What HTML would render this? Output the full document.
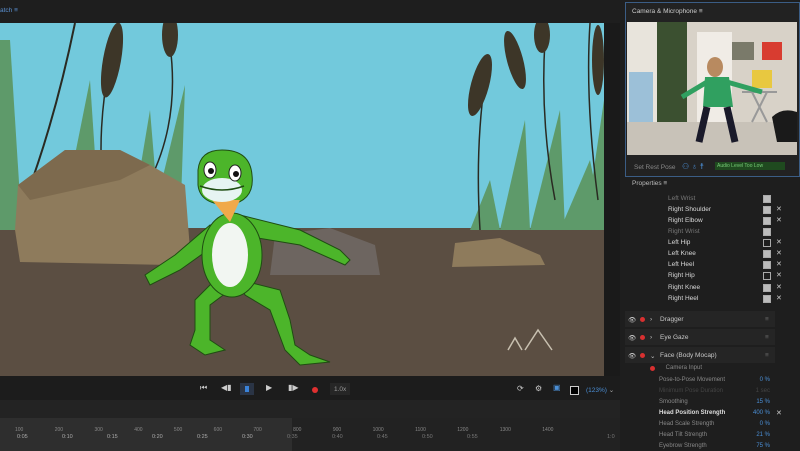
<!DOCTYPE html>
<html><head><meta charset="utf-8"><style>
*{margin:0;padding:0;box-sizing:border-box}
body{width:800px;height:451px;overflow:hidden;background:#1d1d1d;font-family:"Liberation Sans",sans-serif;position:relative}
.a{position:absolute}
.t{position:absolute;font-size:6.5px;color:#c8c8c8;white-space:nowrap}
.lbl{position:absolute;left:668px;font-size:6.5px;color:#d8d8d8}
.dim{color:#777}
.cb{position:absolute;left:763px;width:8px;height:8px;border:1px solid #aaa;background:#bbb}
.cb.e{background:transparent}
.x{position:absolute;left:776px;font-size:7px;color:#ccc}
.v{position:absolute;right:30px;font-size:6px;color:#4b8fd6}
.pl{position:absolute;left:659px;font-size:6px;color:#888}
</style></head><body>
<!-- header -->
<div class="a" style="left:0;top:0;width:620px;height:23px;background:#1e1e1e"></div>
<div class="t" style="left:0;top:7px;color:#5a8fd0">atch ≡</div>
<!-- scene -->
<svg class="a" style="left:0;top:23px" width="604" height="353" viewBox="0 23 604 353">
<rect x="0" y="23" width="604" height="207" fill="#72c9dc"/>
<rect x="0" y="228" width="604" height="148" fill="#5b4e42"/>
<!-- grass left -->
<polygon points="0,40 10,40 22,230 0,230" fill="#5e9a6a"/>
<polygon points="60,230 90,80 100,230" fill="#5e9a6a"/>
<polygon points="130,230 150,110 160,230" fill="#5e9a6a"/>
<polygon points="150,230 185,85 180,230" fill="#5e9a6a"/>
<path d="M25,200 Q55,120 75,23" stroke="#2a2a22" stroke-width="2" fill="none"/>
<path d="M105,200 Q95,140 110,60" stroke="#2a2a22" stroke-width="1.5" fill="none"/>
<path d="M150,180 Q180,120 170,45" stroke="#2a2a22" stroke-width="1.5" fill="none"/>
<ellipse cx="112" cy="60" rx="9" ry="38" fill="#3d3628" transform="rotate(10 112 60)"/>
<ellipse cx="170" cy="35" rx="8" ry="22" fill="#3d3628"/>
<!-- grass right -->
<polygon points="470,230 490,180 500,230" fill="#5e9a6a"/>
<polygon points="500,230 525,120 530,230" fill="#5e9a6a"/>
<polygon points="530,230 560,110 565,230" fill="#5e9a6a"/>
<polygon points="560,230 590,160 604,230" fill="#5e9a6a"/>
<polygon points="585,230 604,100 604,230" fill="#5e9a6a"/>
<path d="M480,230 Q475,150 485,80" stroke="#2a2a22" stroke-width="1.5" fill="none"/>
<path d="M555,200 Q540,120 545,40" stroke="#2a2a22" stroke-width="1.5" fill="none"/>
<path d="M598,200 Q585,100 590,23" stroke="#2a2a22" stroke-width="1.5" fill="none"/>
<ellipse cx="480" cy="85" rx="9" ry="32" fill="#3d3628" transform="rotate(15 480 85)"/>
<ellipse cx="515" cy="60" rx="8" ry="30" fill="#3d3628" transform="rotate(-15 515 60)"/>
<ellipse cx="542" cy="35" rx="8" ry="18" fill="#3d3628"/>
<ellipse cx="598" cy="60" rx="6" ry="35" fill="#3d3628"/>
<!-- rocks -->
<path d="M18,185 L65,150 L120,150 L150,165 L185,185 L190,250 L170,265 L20,262 L15,230Z" fill="#8e7b5c"/>
<path d="M18,185 L65,150 L120,150 L150,165 L120,180 L30,200Z" fill="#7d6a4e"/>
<path d="M275,235 L330,228 L375,245 L380,275 L270,275Z" fill="#6d6560"/>
<path d="M455,243 L500,238 L540,255 L545,265 L452,267Z" fill="#8e7b5c"/>
<path d="M508,350 L515,338 L522,350 M525,350 L538,330 L552,350" stroke="#c8c0b0" stroke-width="1.5" fill="none"/>
<!-- frog -->
<g fill="#4cb52a" stroke="#1f4d12" stroke-width="1">
<path d="M210,225 L175,255 L145,275 L150,285 L180,270 L215,245Z"/>
<path d="M240,215 L300,230 L340,250 L350,260 L345,265 L300,245 L240,235Z"/>
<path d="M215,280 L195,300 L195,330 L190,345 L205,355 L225,350 L210,340 L210,305 L230,290Z"/>
<path d="M240,280 L280,290 L290,320 L295,345 L310,355 L330,362 L300,365 L285,350 L270,310 L245,295Z"/>
<ellipse cx="232" cy="255" rx="30" ry="42"/>
<path d="M198,170 Q200,150 222,150 Q250,150 252,175 Q255,200 230,205 Q200,205 198,185Z"/>
</g>
<ellipse cx="230" cy="255" rx="18" ry="32" fill="#f2f6f2"/>
<path d="M212,200 L240,200 L230,222Z" fill="#f0a94a"/>
<ellipse cx="222" cy="190" rx="20" ry="12" fill="#e6f4f2"/>
<ellipse cx="210" cy="170" rx="6" ry="8" fill="#fff" stroke="#222"/>
<ellipse cx="235" cy="173" rx="6" ry="8" fill="#fff" stroke="#222"/>
<circle cx="211" cy="171" r="3" fill="#111"/><circle cx="236" cy="174" r="3" fill="#111"/>
<path d="M200,186 Q222,194 244,186" stroke="#1f4d12" stroke-width="1.5" fill="none"/>
</svg>
<div class="a" style="left:604px;top:23px;width:16px;height:353px;background:#1a1a1a"></div>
<!-- transport -->
<div class="a" style="left:0;top:376px;width:620px;height:24px;background:#1c1c1c"></div>
<div class="t" style="left:200px;top:383px;font-size:8px;color:#ccc">⏮</div>
<div class="t" style="left:221px;top:383px;font-size:8px;color:#ccc">◀▮</div>
<div class="a" style="left:240px;top:383px;width:14px;height:12px;background:#2a3445"></div>
<div class="a" style="left:245px;top:386px;width:4px;height:6px;background:#3a82d8"></div>
<div class="t" style="left:266px;top:383px;font-size:8px;color:#ccc">▶</div>
<div class="t" style="left:288px;top:383px;font-size:8px;color:#ccc">▮▶</div>
<div class="a" style="left:312px;top:387px;width:6px;height:6px;border-radius:50%;background:#e03030"></div>
<div class="a" style="left:330px;top:383px;width:20px;height:12px;background:#262626"></div>
<div class="t" style="left:334px;top:386px;color:#999">1.0x</div>
<div class="t" style="left:517px;top:384px;font-size:8px">⟳</div>
<div class="t" style="left:535px;top:384px;font-size:8px">⚙</div>
<div class="t" style="left:553px;top:383px;font-size:8px;color:#4b8fd6">▣</div>
<div class="a" style="left:570px;top:386px;width:9px;height:9px;border:1px solid #ccc;background:#000"></div>
<div class="t" style="left:586px;top:386px;color:#4b8fd6">(123%) <span style="color:#aaa">⌄</span></div>
<!-- timeline -->
<div class="a" style="left:0;top:400px;width:620px;height:18px;background:#232323"></div>
<div class="a" style="left:0;top:418px;width:292px;height:33px;background:#2e2e2e"></div>
<div class="a" style="left:292px;top:418px;width:328px;height:33px;background:#222"></div>
<div class="t" style="left:15px;top:427px;font-size:5px;color:#888;word-spacing:30px">100 200 300 400 500 600 700 800 900 1000 1100 1200 1300 1400</div>
<div class="t" style="left:17px;top:434px;font-size:5.5px;color:#aaa">0:05</div>
<div class="t" style="left:62px;top:434px;font-size:5.5px;color:#aaa">0:10</div>
<div class="t" style="left:107px;top:434px;font-size:5.5px;color:#aaa">0:15</div>
<div class="t" style="left:152px;top:434px;font-size:5.5px;color:#aaa">0:20</div>
<div class="t" style="left:197px;top:434px;font-size:5.5px;color:#aaa">0:25</div>
<div class="t" style="left:242px;top:434px;font-size:5.5px;color:#aaa">0:30</div>
<div class="t" style="left:287px;top:434px;font-size:5.5px;color:#777">0:35</div>
<div class="t" style="left:332px;top:434px;font-size:5.5px;color:#777">0:40</div>
<div class="t" style="left:377px;top:434px;font-size:5.5px;color:#777">0:45</div>
<div class="t" style="left:422px;top:434px;font-size:5.5px;color:#777">0:50</div>
<div class="t" style="left:467px;top:434px;font-size:5.5px;color:#777">0:55</div>
<div class="t" style="left:607px;top:434px;font-size:5.5px;color:#777">1:0</div>
<!-- right panel -->
<div class="a" style="left:620px;top:0;width:180px;height:451px;background:#1e1e1e"></div>
<div class="a" style="left:625px;top:2px;width:175px;height:175px;border:1px solid #3b5d85;background:#222"></div>
<div class="t" style="left:632px;top:8px;color:#ccc">Camera &amp; Microphone ≡</div>
<svg class="a" style="left:627px;top:22px" width="170" height="133">
<rect width="170" height="133" fill="#d8d2c8"/>
<rect x="0" y="0" width="30" height="133" fill="#e8e4dc"/>
<rect x="2" y="50" width="24" height="60" fill="#9cc0d8"/>
<rect x="30" y="0" width="30" height="110" fill="#3b5030"/>
<rect x="70" y="10" width="35" height="100" fill="#f0ece6"/>
<rect x="105" y="20" width="22" height="18" fill="#7a7a6a"/>
<rect x="135" y="20" width="20" height="18" fill="#d83c30"/>
<rect x="125" y="48" width="20" height="18" fill="#e8c840"/>
<rect x="0" y="100" width="170" height="33" fill="#c8c2b8"/>
<path d="M115,70 L150,70 M125,70 L140,100 M140,70 L125,100" stroke="#999" stroke-width="2"/>
<path d="M145,95 Q155,85 170,90 L170,120 L150,120Z" fill="#1a1a1a"/>
<ellipse cx="88" cy="45" rx="8" ry="10" fill="#b88a60"/>
<path d="M78,55 L102,55 L106,85 L76,85Z" fill="#30a060"/>
<path d="M80,60 L55,75 M100,60 L135,70" stroke="#30a060" stroke-width="5"/>
<path d="M80,85 L72,120 M100,85 L108,120" stroke="#1a1a2a" stroke-width="7"/>
</svg>
<div class="t" style="left:634px;top:164px;color:#888">Set Rest Pose</div>
<div class="t" style="left:682px;top:162px;color:#4b8fd6;font-size:8px">⚇ ♁ ☨</div>
<div class="a" style="left:715px;top:162px;width:70px;height:8px;background:#1f4a1f"></div>
<div class="t" style="left:717px;top:163px;font-size:5px;color:#7c7">Audio Level Too Low</div>
<div class="t" style="left:632px;top:180px;color:#bbb">Properties ≡</div>
<div class="lbl dim" style="top:195px">Left Wrist</div><div class="cb" style="top:195px"></div>
<div class="lbl" style="top:206px">Right Shoulder</div><div class="cb" style="top:206px"></div><div class="x" style="top:205px">✕</div>
<div class="lbl" style="top:217px">Right Elbow</div><div class="cb" style="top:217px"></div><div class="x" style="top:216px">✕</div>
<div class="lbl dim" style="top:228px">Right Wrist</div><div class="cb" style="top:228px"></div>
<div class="lbl" style="top:239px">Left Hip</div><div class="cb e" style="top:239px"></div><div class="x" style="top:238px">✕</div>
<div class="lbl" style="top:250px">Left Knee</div><div class="cb" style="top:250px"></div><div class="x" style="top:249px">✕</div>
<div class="lbl" style="top:261px">Left Heel</div><div class="cb" style="top:261px"></div><div class="x" style="top:260px">✕</div>
<div class="lbl" style="top:272px">Right Hip</div><div class="cb e" style="top:272px"></div><div class="x" style="top:271px">✕</div>
<div class="lbl" style="top:284px">Right Knee</div><div class="cb" style="top:284px"></div><div class="x" style="top:283px">✕</div>
<div class="lbl" style="top:295px">Right Heel</div><div class="cb" style="top:295px"></div><div class="x" style="top:294px">✕</div>
<div class="a" style="left:625px;top:311px;width:150px;height:16px;background:#252525"></div>
<div class="a" style="left:625px;top:329px;width:150px;height:16px;background:#252525"></div>
<div class="a" style="left:625px;top:347px;width:150px;height:16px;background:#252525"></div>
<div class="t" style="left:628px;top:316px">👁︎</div><div class="a" style="left:640px;top:317px;width:5px;height:5px;border-radius:50%;background:#d83030"></div><div class="t" style="left:650px;top:316px">›</div><div class="t" style="left:660px;top:316px">Dragger</div><div class="t" style="left:765px;top:316px;color:#666">≡</div>
<div class="t" style="left:628px;top:334px">👁︎</div><div class="a" style="left:640px;top:335px;width:5px;height:5px;border-radius:50%;background:#d83030"></div><div class="t" style="left:650px;top:334px">›</div><div class="t" style="left:660px;top:334px">Eye Gaze</div><div class="t" style="left:765px;top:334px;color:#666">≡</div>
<div class="t" style="left:628px;top:352px">👁︎</div><div class="a" style="left:640px;top:353px;width:5px;height:5px;border-radius:50%;background:#d83030"></div><div class="t" style="left:650px;top:352px">⌄</div><div class="t" style="left:660px;top:352px">Face (Body Mocap)</div><div class="t" style="left:765px;top:352px;color:#666">≡</div>
<div class="a" style="left:650px;top:366px;width:5px;height:5px;border-radius:50%;background:#d83030"></div><div class="pl" style="top:365px">&nbsp;&nbsp;&nbsp;&nbsp;Camera Input</div>
<div class="pl" style="top:377px">Pose-to-Pose Movement</div><div class="v" style="top:377px">0 %</div>
<div class="pl" style="top:388px;color:#444">Minimum Pose Duration</div><div class="v" style="top:388px;color:#444">1 sec</div>
<div class="pl" style="top:399px">Smoothing</div><div class="v" style="top:399px">15 %</div>
<div class="pl" style="top:410px;color:#ddd;font-weight:bold">Head Position Strength</div><div class="v" style="top:410px">400 %</div><div class="x" style="top:409px">✕</div>
<div class="pl" style="top:421px">Head Scale Strength</div><div class="v" style="top:421px">0 %</div>
<div class="pl" style="top:432px">Head Tilt Strength</div><div class="v" style="top:432px">21 %</div>
<div class="pl" style="top:443px">Eyebrow Strength</div><div class="v" style="top:443px">75 %</div>
</body></html>
